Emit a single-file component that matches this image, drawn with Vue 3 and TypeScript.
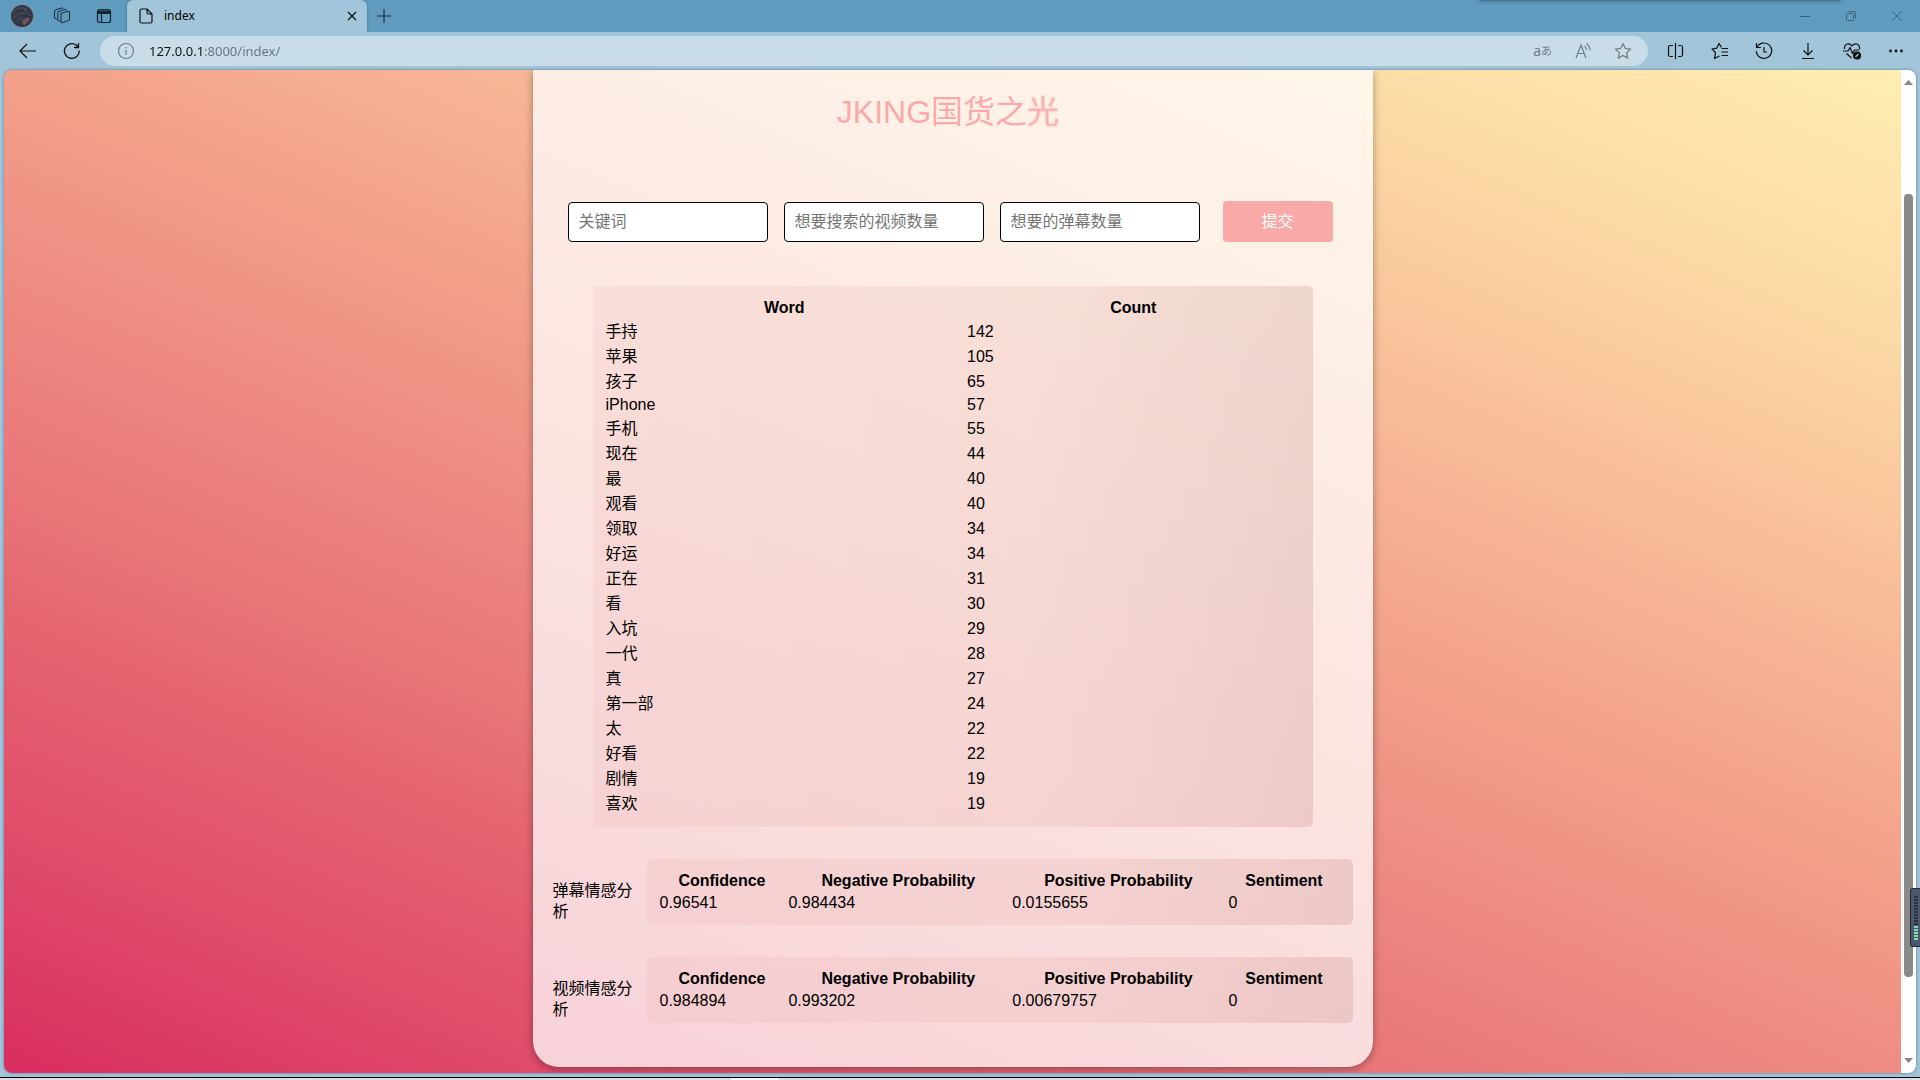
<script setup lang="ts">
import { ref } from 'vue'

interface WordCount {
  word: string
  count: number
}

interface Sentiment {
  label: string
  confidence: string
  negative: string
  positive: string
  sentiment: number
}

const address = ref('127.0.0.1:8000/index/')
const keyword = ref('')
const videoCount = ref('')
const commentCount = ref('')

const words: WordCount[] = [
  { word: '手持', count: 142 },
  { word: '苹果', count: 105 },
  { word: '孩子', count: 65 },
  { word: 'iPhone', count: 57 },
  { word: '手机', count: 55 },
  { word: '现在', count: 44 },
  { word: '最', count: 40 },
  { word: '观看', count: 40 },
  { word: '领取', count: 34 },
  { word: '好运', count: 34 },
  { word: '正在', count: 31 },
  { word: '看', count: 30 },
  { word: '入坑', count: 29 },
  { word: '一代', count: 28 },
  { word: '真', count: 27 },
  { word: '第一部', count: 24 },
  { word: '太', count: 22 },
  { word: '好看', count: 22 },
  { word: '剧情', count: 19 },
  { word: '喜欢', count: 19 },
]

const sentiments: Sentiment[] = [
  { label: '弹幕情感分析', confidence: '0.96541', negative: '0.984434', positive: '0.0155655', sentiment: 0 },
  { label: '视频情感分析', confidence: '0.984894', negative: '0.993202', positive: '0.00679757', sentiment: 0 },
]

const isLatin = (text: string): boolean => /^[\x20-\x7e]+$/.test(text)
</script>

<template>
  <div class="browser">
    <header class="tabs">
      <div class="tabs-left">
        <button class="icon-btn" aria-label="Profile">
          <svg width="24" height="24" viewBox="0 0 24 24">
            <circle cx="12" cy="12" r="12" fill="#7f8fa0" />
            <circle cx="12" cy="12" r="11" fill="#343546" />
            <path d="M3 9c3-5 9-7 14-3M4 14c2-4 7-6 12-4M7 18c1-3 3-4 6-4M14 6c3 1 5 3 6 6" stroke="#565768" stroke-width="1" fill="none" />
            <path d="M12 17c2-3 5-4 8-3-1 3-3 6-6 7-2-1-2-2-2-4z" fill="#6d5557" />
          </svg>
        </button>
        <button class="icon-btn" aria-label="Workspaces">
          <svg width="18" height="18" viewBox="0 0 18 18" fill="none" stroke="#1d3442" stroke-width="1.1" stroke-linejoin="round">
            <path d="M8 6.5l7-2.2q1.500-.4 1.500 1.200v6.500q0 1-1 1.400l-6 2.200q-1.500.4-1.500-1.200z" />
            <path d="M7.500 14.500l-1.500-.6q-1.200-.4-1.200-1.600V6q0-1 1-1.400L12 2.500q1-.3 1.500.8" />
            <path d="M4.500 12.500l-1.800-.7q-1.200-.5-1.200-1.600V4.500q0-1 1-1.400L8.500 1q1-.3 1.500.8" />
          </svg>
        </button>
        <button class="icon-btn" aria-label="Tab actions">
          <svg width="16" height="16" viewBox="0 0 16 16" fill="none" stroke="#16242e" stroke-width="1.200">
            <rect x="1.500" y="1.500" width="13" height="13" rx="2" />
            <path d="M2 3h12v2.500H2z" fill="#16242e" />
            <path d="M5.500 5v9.500" />
          </svg>
        </button>
      </div>
      <div class="tab">
        <svg width="14" height="16" viewBox="0 0 14 16" fill="none" stroke="#111" stroke-width="1.200" stroke-linejoin="round">
          <path d="M1 2.500Q1 1 2.500 1H8l5 5v7.500q0 1.500-1.500 1.500h-9Q1 15 1 13.500zM8 1v3.500Q8 6 9.500 6H13" />
        </svg>
        <span class="tab-title">index</span>
        <button class="icon-btn" aria-label="Close tab">
          <svg width="10" height="10" viewBox="0 0 10 10" stroke="#111" stroke-width="1.300"><path d="M1 1l8 8M9 1L1 9" /></svg>
        </button>
      </div>
      <button class="icon-btn new-tab" aria-label="New tab">
        <svg width="14" height="14" viewBox="0 0 14 14" stroke="#17303e" stroke-width="1.200"><path d="M7 0v14M0 7h14" /></svg>
      </button>
      <div class="window-controls">
        <button class="icon-btn" aria-label="Minimize">
          <svg width="12" height="12" viewBox="0 0 12 12" stroke="#3b6078"><path d="M1 6.500h10" /></svg>
        </button>
        <button class="icon-btn" aria-label="Restore">
          <svg width="12" height="12" viewBox="0 0 12 12" fill="none" stroke="#3b6078"><rect x="1.500" y="3.500" width="7" height="7" rx="1" /><path d="M3.500 1.500H9q1.500 0 1.500 1.500v5.500" /></svg>
        </button>
        <button class="icon-btn" aria-label="Close">
          <svg width="12" height="12" viewBox="0 0 12 12" stroke="#3b6078"><path d="M1 1l10 10M11 1L1 11" /></svg>
        </button>
      </div>
      <div class="top-edge"></div>
    </header>

    <nav class="toolbar">
      <button class="icon-btn" aria-label="Back">
        <svg width="18" height="16" viewBox="0 0 18 16" fill="none" stroke="#111" stroke-width="1.200"><path d="M17 8H1.500M8 1L1 8l7 7" /></svg>
      </button>
      <button class="icon-btn reload" aria-label="Reload">
        <svg width="18" height="18" viewBox="0 0 18 18" fill="none" stroke="#111" stroke-width="1.300"><path d="M16.200 8.500a7.400 7.400 0 1 1-3-5.500l2.300 2.300M15.500 1v4.500H11" /></svg>
      </button>
      <div class="address">
        <svg width="18" height="18" viewBox="0 0 18 18" fill="none" stroke="#6f7c85" stroke-width="1.200"><circle cx="9" cy="9" r="7.500" /><path d="M9 8v5M9 5v1.500" /></svg>
        <input v-model="address" class="address-input" type="text" aria-label="Address" />
        <div class="address-icons">
          <button class="icon-btn" aria-label="Translate">
            <span class="translate">a<small>あ</small></span>
          </button>
          <button class="icon-btn" aria-label="Read aloud">
            <svg width="18" height="18" viewBox="0 0 18 18" fill="none" stroke="#727c84" stroke-width="1.200"><path d="M2 16L7 3l5 13M4 11.500h6.500M10.500 4q2 1.500 2 4M12.500 1.500q3.500 2.500 3.500 7" /></svg>
          </button>
          <button class="icon-btn" aria-label="Favourite">
            <svg width="18" height="18" viewBox="0 0 18 18" fill="none" stroke="#727c84" stroke-width="1.200" stroke-linejoin="round"><path d="M9 1.500l2.300 4.900 5.300.7-3.900 3.700 1 5.300L9 13.500l-4.700 2.600 1-5.300L1.400 7.100l5.300-.7z" /></svg>
          </button>
        </div>
      </div>
      <div class="tools">
        <button class="icon-btn" aria-label="Split screen">
          <svg width="18" height="18" viewBox="0 0 18 18" fill="none" stroke="#111" stroke-width="1.200"><path d="M8.500 1v16M6 3.500H3.500Q1.500 3.500 1.500 5v8q0 1.500 2 1.500H6M11 3.500h2.500q2 0 2 1.500v8q0 1.500-2 1.500H11" /></svg>
        </button>
        <button class="icon-btn" aria-label="Favourites">
          <svg width="18" height="18" viewBox="0 0 18 18" fill="none" stroke="#111" stroke-width="1.200" stroke-linejoin="round"><path d="M10.500 5.500L8 1.500 5.700 6.200 1 7l3.500 3.500L3.500 16.500l5-2.500M10.500 6.500h6.500M10.500 10h6.500M10.500 13.500h6.500" /></svg>
        </button>
        <button class="icon-btn" aria-label="History">
          <svg width="18" height="18" viewBox="0 0 18 18" fill="none" stroke="#111" stroke-width="1.200"><path d="M2 5.500A7.700 7.700 0 1 1 1.300 9M1.500 1v4.500H6M9 5v5h3" /></svg>
        </button>
        <button class="icon-btn" aria-label="Downloads">
          <svg width="18" height="18" viewBox="0 0 18 18" fill="none" stroke="#111" stroke-width="1.200"><path d="M9 1v12M4.500 8.500L9 13l4.500-4.500M3 16.500h12" /></svg>
        </button>
        <button class="icon-btn" aria-label="Browser essentials">
          <svg width="18" height="18" viewBox="0 0 18 18" fill="none" stroke="#111" stroke-width="1.200" stroke-linejoin="round"><path d="M1.500 7Q1 3.500 4 2q3-.8 5 2 2-2.800 5-2 3 1.500 2.500 5M0 9h5l2-3.500 2.500 6L11.500 8h5M3.500 11.500L8.500 16" /><circle cx="14" cy="13.500" r="3.500" fill="#111" /><path d="M12.500 15l3-3" stroke="#a3c5da" /></svg>
        </button>
        <button class="icon-btn" aria-label="More">
          <svg width="18" height="18" viewBox="0 0 18 18" fill="#111"><circle cx="3.500" cy="9" r="1.400" /><circle cx="9" cy="9" r="1.400" /><circle cx="14.500" cy="9" r="1.400" /></svg>
        </button>
      </div>
    </nav>

    <div class="viewport">
      <main class="page">
        <section class="card">
          <h1>JKING国货之<span class="fading">光</span></h1>
          <form class="search" @submit.prevent>
            <input v-model="keyword" type="text" placeholder="关键词" aria-label="关键词" />
            <input v-model="videoCount" type="text" placeholder="想要搜索的视频数量" aria-label="想要搜索的视频数量" />
            <input v-model="commentCount" type="text" placeholder="想要的弹幕数量" aria-label="想要的弹幕数量" />
            <button type="submit">提交</button>
          </form>

          <div class="words">
            <table>
              <thead>
                <tr>
                  <th>Word</th>
                  <th>Count</th>
                </tr>
              </thead>
              <tbody>
                <tr v-for="row in words" :key="row.word" :class="{ tall: !isLatin(row.word) }">
                  <td>{{ row.word }}</td>
                  <td>{{ row.count }}</td>
                </tr>
              </tbody>
            </table>
          </div>

          <div v-for="row in sentiments" :key="row.label" class="analysis">
            <div class="analysis-label">{{ row.label }}</div>
            <table>
              <thead>
                <tr>
                  <th>Confidence</th>
                  <th>Negative Probability</th>
                  <th>Positive Probability</th>
                  <th>Sentiment</th>
                </tr>
              </thead>
              <tbody>
                <tr>
                  <td>{{ row.confidence }}</td>
                  <td>{{ row.negative }}</td>
                  <td>{{ row.positive }}</td>
                  <td>{{ row.sentiment }}</td>
                </tr>
              </tbody>
            </table>
          </div>
        </section>
      </main>
      <div class="scrollbar">
        <svg width="9" height="5" viewBox="0 0 9 5" fill="#868686"><path d="M0 5L4.500 0 9 5z" /></svg>
        <div class="track">
          <div class="before"></div>
          <div class="thumb"></div>
          <div class="after"></div>
        </div>
        <svg width="9" height="5" viewBox="0 0 9 5" fill="#868686"><path d="M0 0l4.500 5L9 0z" /></svg>
      </div>
    </div>
    <footer class="taskbar"><div class="taskbar-item"></div></footer>
    <div class="meter">
      <div class="meter-idle"></div>
      <div class="meter-active"></div>
    </div>
  </div>
</template>

<style>
body {
  margin: 0;
}
</style>

<style scoped>
.browser {
  position: relative;
  display: flex;
  flex-direction: column;
  min-height: 100vh;
  overflow: hidden;
  background: #a3c5da;
  color: #000;
  font: 16px/18px "Liberation Sans", "Noto Sans CJK SC", sans-serif;
}

.icon-btn {
  display: flex;
  align-items: center;
  justify-content: center;
  padding: 0;
  border: 0;
  background: none;
}

.tabs {
  position: relative;
  display: flex;
  height: 32px;
  background: #609cc0;
}

.tabs-left {
  display: flex;
  align-items: center;
  gap: 19px;
  width: 117px;
  padding-left: 10px;
}

.tabs-left .icon-btn:last-child {
  margin-left: 6px;
}

.tab {
  display: flex;
  align-items: center;
  box-sizing: border-box;
  width: 240px;
  padding: 0 10px 0 12px;
  border-radius: 6px 6px 0 0;
  background: #a3c5da;
  box-shadow: 0 0 3px rgba(0, 40, 70, 0.4);
  clip-path: inset(0 -4px 0 -4px);
}

.tab-title {
  flex: 1;
  margin-left: 11px;
  font: 12px/16px "Noto Sans", sans-serif;
}

.new-tab {
  margin-left: 10px;
}

.window-controls {
  display: flex;
  gap: 34px;
  margin-left: auto;
  padding-right: 17px;
}

.top-edge {
  position: absolute;
  top: 0;
  right: 80px;
  width: 360px;
  height: 1px;
  background: #44748f;
  box-shadow: 0 0 4px 1px #44748f;
}

.toolbar {
  display: flex;
  align-items: center;
  height: 38px;
  padding-left: 19px;
}

.reload {
  margin: 0 19px 0 26px;
}

.address {
  display: flex;
  flex: 1;
  align-items: center;
  box-sizing: border-box;
  height: 30px;
  padding: 0 16px 0 17px;
  border-radius: 15px;
  background: #c9dde9;
}

.address-input {
  flex: 1;
  margin-left: 14px;
  padding: 0;
  border: 0;
  outline: 0;
  background: linear-gradient(to right, #111 54px, #66727a 54px);
  background-clip: text;
  color: transparent;
  font: 13px/20px "Noto Sans", sans-serif;
}

.address-icons {
  display: flex;
  gap: 22px;
}

.translate {
  display: flex;
  align-items: center;
  color: #727c84;
  font: 14px/18px "Noto Sans", "Noto Sans CJK JP", sans-serif;
}

.translate small {
  font-size: 11px;
}

.tools {
  display: flex;
  gap: 26px;
  padding: 0 15px 0 19px;
}

.viewport {
  display: flex;
  flex: 1;
  margin: 0 4px 4px;
  border-radius: 8px;
  overflow: hidden;
  box-shadow: 0 0 3px rgba(30, 70, 100, 0.6);
}

.page {
  flex: 1;
  background: linear-gradient(203deg, #ffeeb0 0%, #fcdba6 14%, #f9c09a 28%, #f4a58c 42%, #ee8b82 56%, #e9777a 67%, #e56670 74%, #e04e6a 86%, #d92d60 100%);
}

.card {
  box-sizing: border-box;
  max-width: 840px;
  margin: 0 auto 6px;
  padding: 22px 20px 44px;
  border-radius: 0 0 26px 26px;
  background: rgba(255, 255, 255, 0.75);
  box-shadow: 0 2px 8px rgba(0, 0, 0, 0.35);
}

h1 {
  margin: 0 9px 69px 0;
  color: #faa9a9;
  font-size: 32px;
  font-weight: 400;
  line-height: 40px;
  text-align: center;
}

.fading {
  opacity: 0.85;
  text-shadow: 0 0 2px #faa9a9;
}

.search {
  display: flex;
  align-items: center;
  gap: 16px;
  margin: 0 15px 44px;
}

.search input {
  box-sizing: border-box;
  width: 200px;
  height: 40px;
  padding: 0 10px;
  border: 1px solid #000;
  border-radius: 4px;
  background: #fff;
  font: inherit;
}

.search input::placeholder {
  color: #757575;
}

.search button {
  width: 110px;
  height: 41px;
  margin-left: 7px;
  padding: 0;
  border: 0;
  border-radius: 4px;
  background: #faa9a9;
  color: #fff;
  font: inherit;
}

table {
  width: 100%;
  padding: 10px;
  border-collapse: separate;
  border-spacing: 2px;
  border-radius: 5px;
  background: linear-gradient(to right, rgba(228, 160, 158, 0.14), rgba(216, 146, 138, 0.15) 60%, rgba(165, 84, 78, 0.17));
}

th,
td {
  padding: 1px;
}

td {
  text-align: left;
}

.tall td {
  line-height: 21px;
}

.words {
  margin: 0 40px 32px;
}

.analysis {
  display: flex;
  gap: 10px;
}

.analysis + .analysis {
  margin-top: 32px;
}

.analysis-label {
  flex: 0 0 84px;
  margin-top: 21px;
  line-height: 21px;
}

.analysis table {
  flex: 1;
}

.scrollbar {
  display: flex;
  flex-direction: column;
  align-items: center;
  justify-content: space-between;
  width: 15px;
  padding: 10px 0;
  background: #fdfdfd;
}

.track {
  display: flex;
  flex: 1;
  flex-direction: column;
  width: 9px;
}

.before {
  flex: 109;
}

.thumb {
  flex: 783;
  border-radius: 4px;
  background: #8a8a8a;
}

.after {
  flex: 81;
}

.taskbar {
  height: 2px;
  padding-left: 731px;
  border-top: 1px solid #000;
  background: #dcdde1;
}

.taskbar-item {
  width: 48px;
  height: 2px;
  background: #f6f7f8;
}

.meter {
  position: absolute;
  top: 888px;
  right: 0;
  box-sizing: border-box;
  width: 10px;
  height: 59px;
  padding: 7px 2px 0 3px;
  border: 1px solid #252b3a;
  border-right: 0;
  border-radius: 3px 0 0 3px;
  background: #4d586e;
}

.meter-idle {
  height: 30px;
  background: repeating-linear-gradient(#2a3142 0 2px, #4d586e 2px 3px);
}

.meter-active {
  height: 15px;
  background: repeating-linear-gradient(#7fe0b4 0 2px, #4d586e 2px 3px);
}
</style>
